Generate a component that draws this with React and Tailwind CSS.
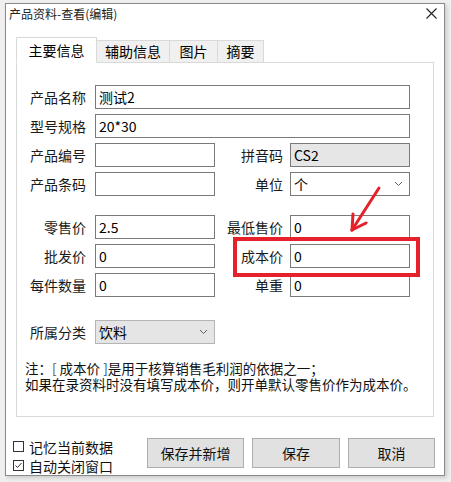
import React from 'react';

const Chevron = () => (
  <svg width="9" height="6" viewBox="0 0 9 6" className="shrink-0">
    <polyline points="1,1 4.5,4.5 8,1" fill="none" stroke="#606060" strokeWidth="1" />
  </svg>
);

const Field = ({ value = '', className = '' }) => (
  <div className={`h-[24px] border border-[#7a7a7a] flex items-center pl-[3px] text-[14px] leading-none text-black ${className}`}>
    {value}
  </div>
);

const Label = ({ children, w = 'w-[69px]' }) => (
  <div className={`${w} text-right text-[14px] leading-none text-[#1a1a1a] shrink-0`}>{children}</div>
);

const Tab = ({ children, active, className = '' }) => (
  <div
    className={`flex items-center justify-center border border-[#d9d9d9] text-[14px] leading-none ${
      active ? 'h-[26px] bg-white border-b-white z-10 -mb-px' : 'h-[22px] bg-[#f0f0f0] border-b-0 -ml-px'
    } ${className}`}
  >
    {children}
  </div>
);

const Check = ({ checked, children }) => (
  <div className="flex items-center gap-[5px] h-[19px]">
    <span className="w-[11px] h-[11px] border border-[#333] bg-white flex items-center justify-center">
      {checked && (
        <svg width="9" height="9" viewBox="0 0 9 9">
          <polyline points="1.5,4.5 3.5,6.5 7.5,2" fill="none" stroke="#333" strokeWidth="1" />
        </svg>
      )}
    </span>
    <span className="text-[14px] leading-none text-[#111]">{children}</span>
  </div>
);

export default function App() {
  return (
    <div className="relative w-[451px] h-[482px] bg-[#efefef] pt-[3px] pl-[5px] overflow-hidden font-['Noto_Sans_CJK_SC',sans-serif]">
      {/* 对话框 */}
      <div className="w-[440px] h-[473px] bg-white border border-[#8a8a8a] shadow-[2px_2px_4px_rgba(0,0,0,0.15)] flex flex-col">
        {/* 标题栏 */}
        <div className="h-[20px] flex items-center justify-between pl-[3px] pr-[7px]">
          <span className="text-[12px] leading-none text-[#222]">产品资料-查看(编辑)</span>
          <svg width="11" height="11" viewBox="0 0 11 11">
            <path d="M0.5 0.5 L10.5 10.5 M10.5 0.5 L0.5 10.5" stroke="#222" strokeWidth="1.1" />
          </svg>
        </div>

        {/* 标签页 */}
        <div className="ml-[10px] mt-[13px] flex items-end">
          <Tab active className="w-[81px]">主要信息</Tab>
          <Tab className="w-[74px]">辅助信息</Tab>
          <Tab className="w-[49px]">图片</Tab>
          <Tab className="w-[47px]">摘要</Tab>
        </div>

        {/* 面板 */}
        <div className="ml-[10px] w-[418px] h-[360px] border border-[#d9d9d9] flex flex-col pt-[22px]">
          <div className="flex items-center gap-[9px]">
            <Label>产品名称</Label>
            <Field value="测试2" className="w-[315px]" />
          </div>
          <div className="flex items-center gap-[9px] mt-[5px]">
            <Label>型号规格</Label>
            <Field value="20*30" className="w-[315px]" />
          </div>
          <div className="flex items-center mt-[5px]">
            <Label>产品编号</Label>
            <Field className="w-[120px] ml-[9px]" />
            <Label w="w-[68px]">拼音码</Label>
            <Field value="CS2" className="w-[120px] ml-[7px] bg-[#e6e6e6] text-[#222]" />
          </div>
          <div className="flex items-center mt-[5px]">
            <Label>产品条码</Label>
            <Field className="w-[120px] ml-[9px]" />
            <Label w="w-[68px]">单位</Label>
            <div className="w-[120px] ml-[7px] h-[24px] border border-[#7a7a7a] flex items-center justify-between pl-[3px] pr-[6px] text-[14px] leading-none">
              <span>个</span>
              <Chevron />
            </div>
          </div>

          <div className="flex items-center mt-[19px]">
            <Label>零售价</Label>
            <Field value="2.5" className="w-[120px] ml-[9px]" />
            <Label w="w-[68px]">最低售价</Label>
            <Field value="0" className="w-[120px] ml-[7px]" />
          </div>
          <div className="flex items-center mt-[5px]">
            <Label>批发价</Label>
            <Field value="0" className="w-[120px] ml-[9px]" />
            <Label w="w-[68px]">成本价</Label>
            <Field value="0" className="w-[120px] ml-[7px]" />
          </div>
          <div className="flex items-center mt-[5px]">
            <Label>每件数量</Label>
            <Field value="0" className="w-[120px] ml-[9px]" />
            <Label w="w-[68px]">单重</Label>
            <Field value="0" className="w-[120px] ml-[7px]" />
          </div>

          <div className="flex items-center mt-[23px]">
            <Label>所属分类</Label>
            <div className="w-[120px] ml-[9px] h-[24px] border border-[#b4b4b4] bg-[#e5e5e5] flex items-center justify-between pl-[3px] pr-[6px] text-[14px] leading-none">
              <span>饮料</span>
              <Chevron />
            </div>
          </div>

          <div className="mt-[16px] pl-[8px] text-[13.5px] leading-[16px] text-[#111]">
            <div>
              注：<span className="text-[#6b4a2a]">[</span> 成本价 <span className="text-[#2a4a9b]">]</span>是用于核算销售毛利润的依据之一；
            </div>
            <div>如果在录资料时没有填写成本价，则开单默认零售价作为成本价。</div>
          </div>
        </div>

        {/* 底部 */}
        <div className="flex items-start mt-[20px] pl-[7px]">
          <div className="flex flex-col w-[134px]">
            <Check>记忆当前数据</Check>
            <Check checked>自动关闭窗口</Check>
          </div>
          <div className="flex gap-[8px] mt-px">
            <button className="w-[97px] h-[30px] bg-[#e1e1e1] border border-[#adadad] text-[14px] leading-none text-[#111]">保存并新增</button>
            <button className="w-[88px] h-[30px] bg-[#e1e1e1] border border-[#adadad] text-[14px] leading-none text-[#111]">保存</button>
            <button className="w-[87px] h-[30px] bg-[#e1e1e1] border border-[#adadad] text-[14px] leading-none text-[#111]">取消</button>
          </div>
        </div>
      </div>

      {/* 红色标注 */}
      <div className="absolute left-[233px] top-[237px] w-[187px] h-[40px] border-[4px] border-[#e5222b]" />
      <svg className="absolute left-0 top-0" width="451" height="482" viewBox="0 0 451 482">
        <g stroke="#e5222b" strokeWidth="3" strokeLinecap="round" fill="none">
          <line x1="379" y1="188" x2="352" y2="230" />
          <line x1="352" y1="230" x2="353" y2="214" />
          <line x1="352" y1="230" x2="366" y2="223" />
        </g>
      </svg>
    </div>
  );
}
